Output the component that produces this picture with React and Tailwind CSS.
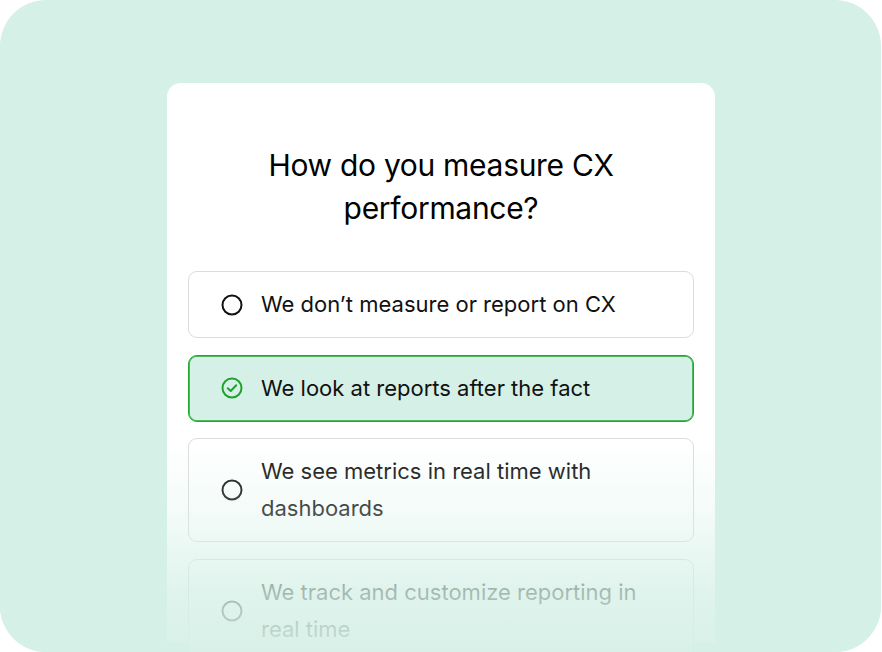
import React from "react";

function EmptyCircle() {
  return (
    <svg width="22" height="22" viewBox="0 0 22 22" className="shrink-0">
      <circle cx="11" cy="11" r="9.5" fill="none" stroke="#111" strokeWidth="2" />
    </svg>
  );
}

function CheckCircle() {
  return (
    <svg width="22" height="22" viewBox="0 0 22 22" className="shrink-0">
      <circle cx="11" cy="11" r="9.5" fill="none" stroke="#1fa22b" strokeWidth="2" />
      <path d="M6.8 11.2 L9.7 14 L15.2 8.3" fill="none" stroke="#1fa22b" strokeWidth="2" strokeLinecap="round" strokeLinejoin="round" />
    </svg>
  );
}

function Option({ selected, children }) {
  return (
    <div
      className={
        "flex items-center gap-[18px] rounded-[9px] border-[1.5px] pl-[32px] pr-4 py-[14px] " +
        (selected
          ? "border-[#1fa82b] bg-[#d5f0e6] shadow-[inset_0_0_0_0.75px_#1fa82b]"
          : "border-[#dcdcdc] bg-white")
      }
    >
      {selected ? <CheckCircle /> : <EmptyCircle />}
      <div className="text-[22px] leading-[37px] text-[#111]">{children}</div>
    </div>
  );
}

export default function App() {
  return (
    <div className="w-[882px] h-[652px] bg-white" style={{ fontFamily: "Inter, 'Liberation Sans', sans-serif" }}>
      <div className="relative w-[881px] h-[652px] rounded-[46px] bg-[#d5f0e6] overflow-hidden pt-[83px] pl-[167px]">
        <div className="w-[548px] h-[560px] bg-white rounded-t-[14px] pt-[61px] px-[21px]">
          <h1 className="text-center text-[30px] leading-[43px] text-black tracking-[-0.3px] px-[60px]">
            How do you measure CX performance?
          </h1>
          <div className="mt-[41px] flex flex-col gap-[16.5px]">
            <Option>We don’t measure or report on CX</Option>
            <Option selected>We look at reports after the fact</Option>
            <Option>
              We see metrics in real time with
              <br />
              dashboards
            </Option>
            <Option>
              We track and customize reporting in
              <br />
              real time
            </Option>
          </div>
        </div>
        <div
          className="absolute left-0 right-0 bottom-0 h-[212px] pointer-events-none"
          style={{
            background:
              "linear-gradient(to bottom, rgba(213,240,230,0) 0%, rgba(213,240,230,0.25) 32%, rgba(213,240,230,0.75) 71%, rgba(213,240,230,0.88) 90%, rgba(213,240,230,0.93) 100%)",
          }}
        />
      </div>
    </div>
  );
}
